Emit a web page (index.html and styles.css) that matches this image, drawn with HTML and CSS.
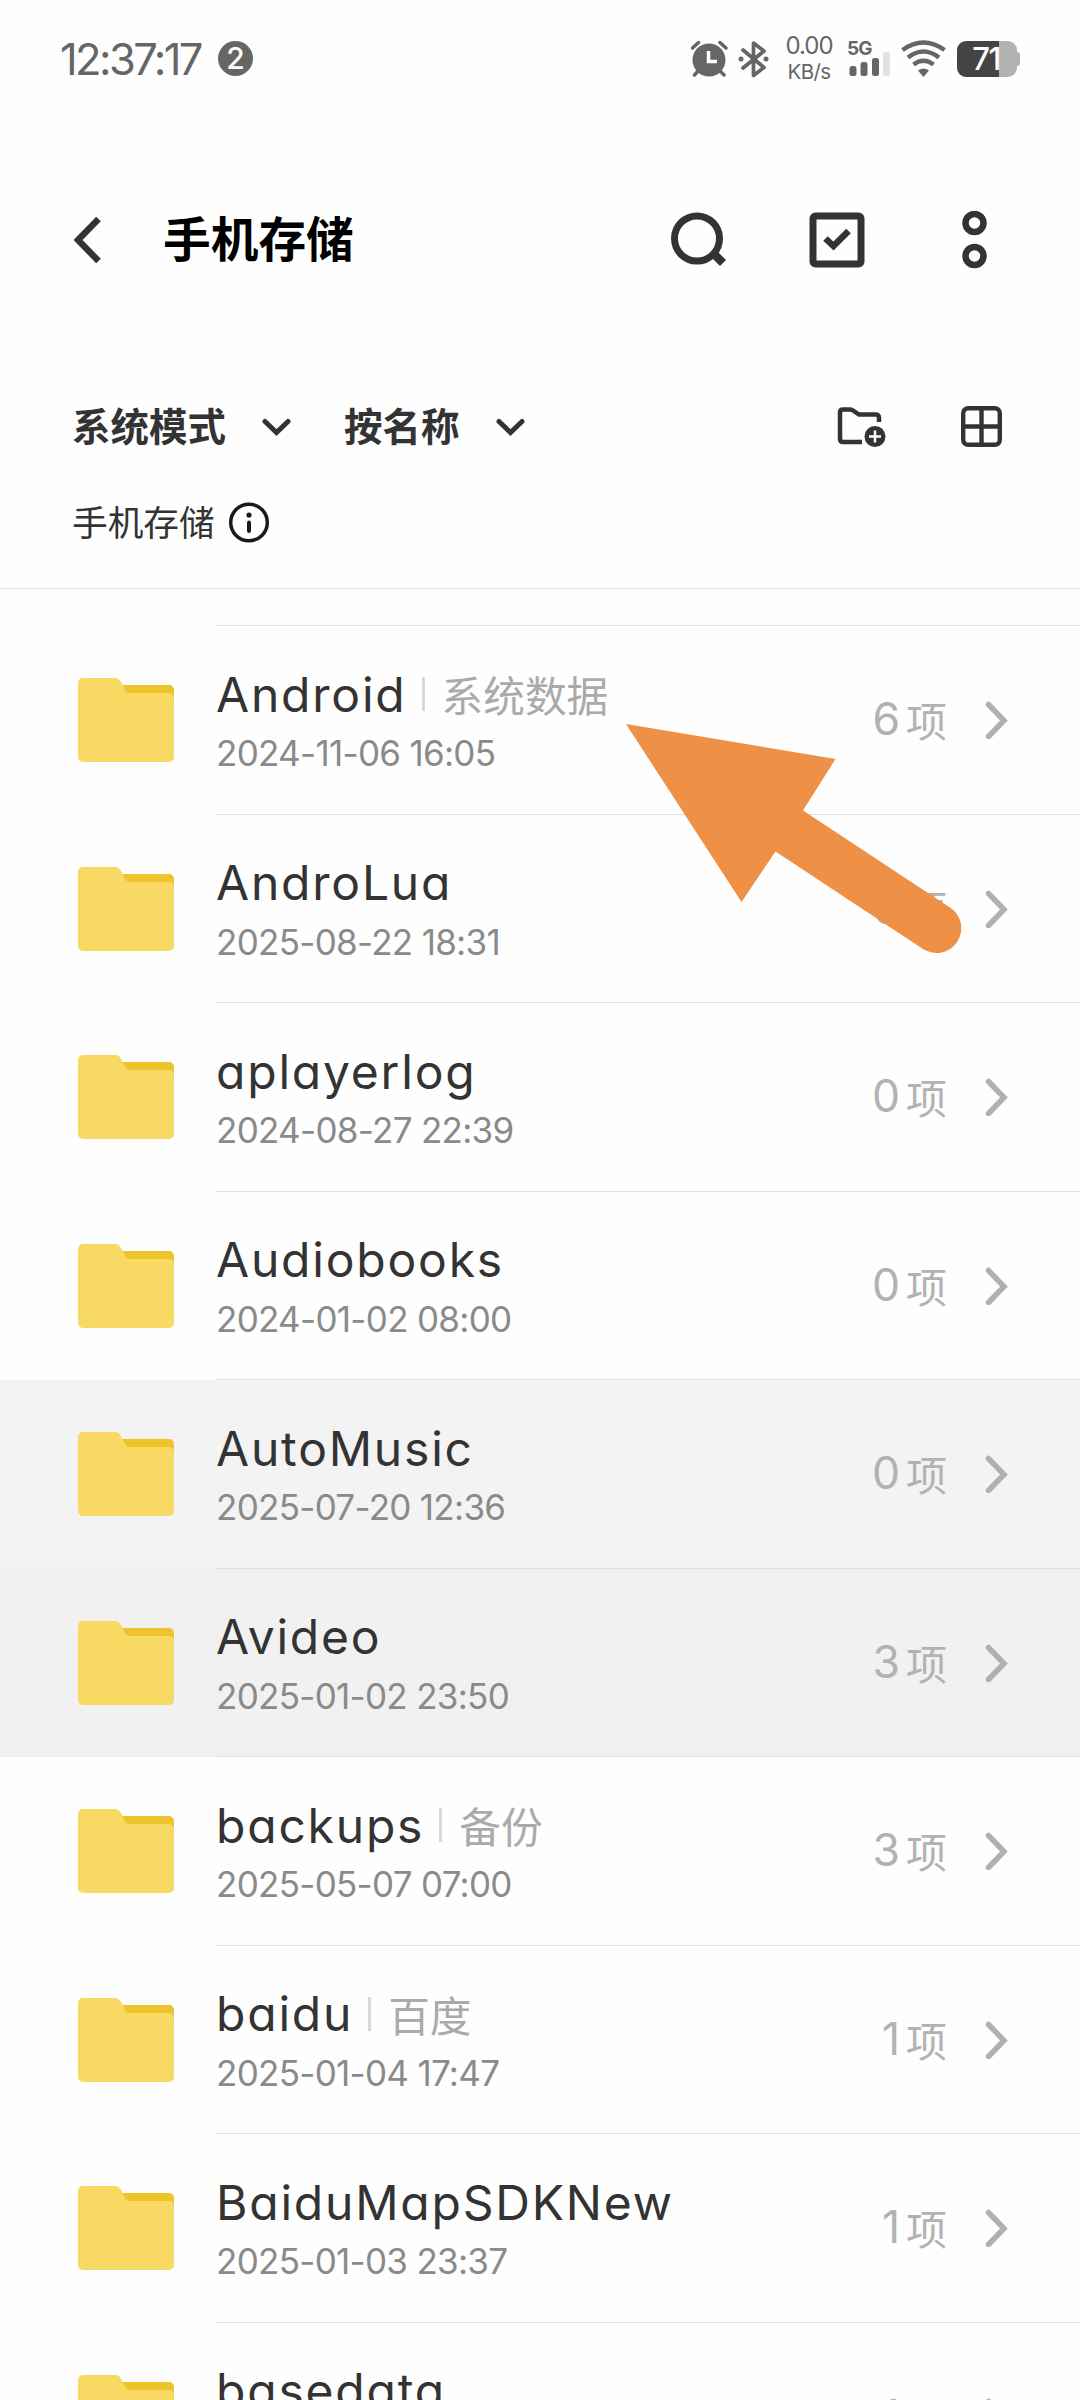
FILE: index.html
```html
<!DOCTYPE html>
<html lang="zh-CN">
<head>
    <meta charset="UTF-8">
    <meta name="viewport" content="width=device-width, initial-scale=1.0">
    <title>手机存储</title>
    <link rel="stylesheet" href="styles.css">
</head>
<body>
    <!-- iconos compartidos -->
    <svg class="sprite" width="0" height="0">
        <symbol id="folder" viewBox="0 0 96 84">
            <path d="M40 7H91a5 5 0 0 1 5 5V30H40Z" fill="#efc42b"/>
            <path d="M5 0H37Q41 0 43 4L47 12Q48.500 15 52 15H91Q95 15 96 19V79a5 5 0 0 1-5 5H5a5 5 0 0 1-5-5V5a5 5 0 0 1 5-5Z" fill="#f7d963"/>
        </symbol>
        <symbol id="next" viewBox="0 0 24 38">
            <path d="M3.500 3.500L19 19.500L3.500 35.500" fill="none" stroke="#b0b0b0" stroke-width="5.500" stroke-linecap="round"/>
        </symbol>
        <symbol id="down" viewBox="0 0 30 18">
            <path d="M3 3.500L14.500 14.500L26 3.500" fill="none" stroke="#333" stroke-width="5" stroke-linecap="round"/>
        </symbol>
    </svg>

    <div class="phone">
        <div class="status">
            <span class="clock">12:37:17</span>
            <span class="badge">2</span>
            <div class="status-icons">
                <svg class="alarm" width="38" height="38" viewBox="0 0 38 38">
                    <circle cx="18" cy="20" r="16.500" fill="#666"/>
                    <path d="M1.500 8L7.500 2.500M35 8L29 2.500M3.500 35L7 31M33 35L29 31" stroke="#666" stroke-width="3.500" stroke-linecap="round"/>
                    <path d="M17.500 11V21.500H26" fill="none" stroke="#fefefe" stroke-width="3.500"/>
                </svg>
                <svg class="bluetooth" width="32" height="38" viewBox="0 0 32 38">
                    <path d="M5 10L26 27.500L15.500 35.500V3L26 11L5 28" fill="none" stroke="#666" stroke-width="3.700" stroke-linejoin="round" stroke-linecap="round"/>
                    <circle cx="3" cy="19" r="2.500" fill="#666"/>
                    <circle cx="28" cy="19" r="2.500" fill="#666"/>
                </svg>
                <div class="speed">
                    <span class="speed-num">0.00</span>
                    <span class="speed-unit">KB/s</span>
                </div>
                <div class="signal">
                    <span class="net">5G</span>
                    <svg width="42" height="25" viewBox="0 0 42 25">
                        <rect x="1.500" y="14" width="7" height="10" rx="2.500" fill="#666"/>
                        <rect x="12.500" y="10" width="7" height="14" rx="2.500" fill="#666"/>
                        <rect x="24" y="6" width="7" height="18" rx="2.500" fill="#666"/>
                        <rect x="35" y="0" width="7" height="24" rx="2.500" fill="#e2e2e2"/>
                    </svg>
                </div>
                <svg class="wifi" width="45" height="37" viewBox="0 0 45 37">
                    <g fill="none" stroke="#666" stroke-width="4.500">
                        <path d="M1.500 10Q22.500-5 43.500 10"/>
                        <path d="M7 17.500Q22.500 5.500 38 17.500"/>
                        <path d="M12.500 24.500Q22.500 17 32.500 24.500"/>
                    </g>
                    <path d="M17 30.500Q22.500 26.500 28 30.500L22.500 37Z" fill="#666"/>
                </svg>
                <div class="battery"><span>71</span></div>
            </div>
        </div>

        <div class="toolbar">
            <svg class="back" width="28" height="48" viewBox="0 0 28 48">
                <path d="M24.500 3L4 24L24.500 45" fill="none" stroke="#333" stroke-width="6.500"/>
            </svg>
            <h1 class="title">手机存储</h1>
            <div class="actions">
                <svg width="56" height="56" viewBox="0 0 56 56">
                    <circle cx="26" cy="26.500" r="22.500" fill="none" stroke="#333" stroke-width="7"/>
                    <path d="M41 40L52 51" stroke="#333" stroke-width="8.500"/>
                </svg>
                <svg width="56" height="56" viewBox="0 0 56 56">
                    <rect x="4" y="4" width="48" height="48" rx="2.500" fill="none" stroke="#333" stroke-width="7"/>
                    <path d="M16.500 26.500L24.500 34L39.500 19" fill="none" stroke="#333" stroke-width="6.500"/>
                </svg>
                <svg width="26" height="58" viewBox="0 0 26 58">
                    <circle cx="12.500" cy="12" r="9" fill="none" stroke="#333" stroke-width="6.500"/>
                    <circle cx="12.500" cy="45" r="9" fill="none" stroke="#333" stroke-width="6.500"/>
                </svg>
            </div>
        </div>

        <div class="filters">
            <span class="filter">系统模式</span>
            <svg class="down" width="30" height="18"><use href="#down"/></svg>
            <span class="filter second">按名称</span>
            <svg class="down" width="30" height="18"><use href="#down"/></svg>
            <div class="view-icons">
                <svg width="50" height="42" viewBox="0 0 50 42">
                    <path d="M42 16V12Q42 8.500 38.500 8.500H22L16 4.500Q14.500 3.500 12.500 3.500H6Q3 3.500 3 6.500V33Q3 36 6 36H25" fill="none" stroke="#333" stroke-width="4.500"/>
                    <circle cx="38" cy="30.500" r="10.500" fill="#333"/>
                    <path d="M38 24.500V36.500M32 30.500H44" stroke="#fefefe" stroke-width="2.500"/>
                </svg>
                <svg width="41" height="41" viewBox="0 0 41 41">
                    <rect x="2.200" y="2.200" width="36.600" height="36.600" rx="5" fill="none" stroke="#333" stroke-width="4.400"/>
                    <path d="M20.500 2V39M2 20.500H39" stroke="#333" stroke-width="4.400"/>
                </svg>
            </div>
        </div>

        <div class="path">
            <span>手机存储</span>
            <svg width="42" height="42" viewBox="0 0 42 42">
                <circle cx="21" cy="20.500" r="18.300" fill="none" stroke="#1a1a1a" stroke-width="3.500"/>
                <circle cx="21" cy="13" r="2.600" fill="#1a1a1a"/>
                <path d="M21 20.500V29" stroke="#1a1a1a" stroke-width="4" stroke-linecap="round"/>
            </svg>
        </div>

        <div class="list">
            <div class="first-line"></div>
            <div class="row">
                <svg class="folder"><use href="#folder"/></svg>
                <div class="info">
                    <div class="name">Android<span class="tag">系统数据</span></div>
                    <div class="date">2024-11-06 16:05</div>
                </div>
                <div class="count"><b>6</b>项</div>
                <svg class="next"><use href="#next"/></svg>
            </div>
            <div class="row">
                <svg class="folder"><use href="#folder"/></svg>
                <div class="info">
                    <div class="name">AndroLua</div>
                    <div class="date">2025-08-22 18:31</div>
                </div>
                <div class="count"><b>6</b>项</div>
                <svg class="next"><use href="#next"/></svg>
            </div>
            <div class="row">
                <svg class="folder"><use href="#folder"/></svg>
                <div class="info">
                    <div class="name">aplayerlog</div>
                    <div class="date">2024-08-27 22:39</div>
                </div>
                <div class="count"><b>0</b>项</div>
                <svg class="next"><use href="#next"/></svg>
            </div>
            <div class="row">
                <svg class="folder"><use href="#folder"/></svg>
                <div class="info">
                    <div class="name">Audiobooks</div>
                    <div class="date">2024-01-02 08:00</div>
                </div>
                <div class="count"><b>0</b>项</div>
                <svg class="next"><use href="#next"/></svg>
            </div>
            <div class="row active">
                <svg class="folder"><use href="#folder"/></svg>
                <div class="info">
                    <div class="name">AutoMusic</div>
                    <div class="date">2025-07-20 12:36</div>
                </div>
                <div class="count"><b>0</b>项</div>
                <svg class="next"><use href="#next"/></svg>
            </div>
            <div class="row active dark">
                <svg class="folder"><use href="#folder"/></svg>
                <div class="info">
                    <div class="name">Avideo</div>
                    <div class="date">2025-01-02 23:50</div>
                </div>
                <div class="count"><b>3</b>项</div>
                <svg class="next"><use href="#next"/></svg>
            </div>
            <div class="row">
                <svg class="folder"><use href="#folder"/></svg>
                <div class="info">
                    <div class="name">backups<span class="tag">备份</span></div>
                    <div class="date">2025-05-07 07:00</div>
                </div>
                <div class="count"><b>3</b>项</div>
                <svg class="next"><use href="#next"/></svg>
            </div>
            <div class="row">
                <svg class="folder"><use href="#folder"/></svg>
                <div class="info">
                    <div class="name">baidu<span class="tag">百度</span></div>
                    <div class="date">2025-01-04 17:47</div>
                </div>
                <div class="count"><b>1</b>项</div>
                <svg class="next"><use href="#next"/></svg>
            </div>
            <div class="row">
                <svg class="folder"><use href="#folder"/></svg>
                <div class="info">
                    <div class="name">BaiduMapSDKNew</div>
                    <div class="date">2025-01-03 23:37</div>
                </div>
                <div class="count"><b>1</b>项</div>
                <svg class="next"><use href="#next"/></svg>
            </div>
            <div class="row">
                <svg class="folder"><use href="#folder"/></svg>
                <div class="info">
                    <div class="name">basedata</div>
                </div>
                <div class="count"><b>1</b>项</div>
                <svg class="next"><use href="#next"/></svg>
            </div>

            <!-- flecha encima de la lista -->
            <svg class="arrow" width="336" height="230" viewBox="0 0 336 230">
                <path d="M0 0L209.500 35L177 86.500L324 183.500A24.500 24.500 0 0 1 297 225L149.500 127.500L115.500 178Z" fill="#ee9147"/>
            </svg>
        </div>
    </div>
</body>
</html>
```
FILE: styles.css
```css
* {
    box-sizing: border-box;
}
body {
    margin: 0;
    background-color: #fefefe;
    font-family: Inter, "Noto Sans CJK SC", sans-serif;
    color: #333;
}
svg {
    display: block;
    flex-shrink: 0;
}
.sprite {
    position: absolute;
}
.phone {
    width: 1080px;
    height: 2400px;
    overflow: hidden;
}

/* barra de estado */
.status {
    display: flex;
    align-items: center;
    height: 117px;
    padding: 0 60px;
    color: #666;
}
.clock {
    width: 158px;
    font-size: 43.5px;
    letter-spacing: -2.6px;
    white-space: nowrap;
}
.badge {
    width: 35px;
    height: 35px;
    border-radius: 50%;
    background-color: #666;
    color: #fefefe;
    font-size: 30px;
    font-weight: 500;
    line-height: 35px;
    text-align: center;
}
.status-icons {
    display: flex;
    align-items: center;
    margin-left: auto;
}
.bluetooth {
    margin-left: 9px;
}
.speed {
    display: flex;
    flex-direction: column;
    width: 50px;
    margin-left: 14px;
    text-align: center;
    white-space: nowrap;
}
.speed-num {
    font-size: 24px;
    line-height: 26px;
    letter-spacing: -1px;
}
.speed-unit {
    font-size: 20.5px;
    line-height: 26px;
    letter-spacing: -0.6px;
}
.signal {
    width: 42px;
    margin-left: 14px;
}
.net {
    display: block;
    height: 12px;
    margin-left: -1px;
    font-size: 19px;
    font-weight: 700;
    line-height: 17px;
    letter-spacing: -1px;
}
.wifi {
    margin-left: 11px;
}
.battery {
    position: relative;
    width: 60px;
    height: 36px;
    margin-left: 11px;
    margin-right: 3px;
    padding-right: 2px;
    border-radius: 9px;
    background: linear-gradient(90deg, #444 42px, #b2b2b2 42px);
    color: #fefefe;
    font-size: 31px;
    font-weight: 500;
    line-height: 36px;
    letter-spacing: -1.5px;
    text-align: center;
}
.battery::after {
    content: "";
    position: absolute;
    top: 11px;
    right: -3px;
    width: 3px;
    height: 14px;
    border-radius: 0 3px 3px 0;
    background-color: #b2b2b2;
}

/* cabecera */
.toolbar {
    display: flex;
    align-items: center;
    height: 245px;
    padding: 0 92px 0 74px;
}
.title {
    margin: 0 0 0 61px;
    color: #000;
    font-size: 47.7px;
    font-weight: 700;
    line-height: 60px;
}
.actions {
    display: flex;
    align-items: center;
    gap: 82px;
    margin-left: auto;
}
.actions svg:last-child {
    margin-left: 15px;
}
.filters {
    display: flex;
    align-items: center;
    height: 129px;
    padding: 0 78px 0 72px;
}
.filter {
    font-size: 38.5px;
    font-weight: 700;
    line-height: 50px;
}
.down {
    margin-left: 36px;
}
.second {
    margin-left: 52px;
}
.view-icons {
    display: flex;
    align-items: center;
    gap: 74px;
    margin-left: auto;
}
.path {
    display: flex;
    align-items: center;
    height: 98px;
    padding: 0 0 34px 72px;
    border-bottom: 1px solid #dfdfdf;
    font-size: 35.7px;
    line-height: 50px;
}
.path svg {
    margin-left: 13px;
}

/* lista de carpetas */
.list {
    position: relative;
    padding-top: 36px;
}
.first-line {
    height: 1px;
    margin-left: 216px;
    background-color: #dfdfdf;
}
.row {
    display: flex;
    align-items: center;
    height: 188.5px;
    padding: 0 71px 0 78px;
    background: linear-gradient(#dfdfdf, #dfdfdf) 216px 100% / 864px 1px no-repeat;
}
.active {
    background-color: #f3f3f3;
}
.dark {
    background-color: #f1f1f1;
}
.folder {
    width: 96px;
    height: 84px;
}
.info {
    flex: 1;
    height: 188px;
    padding-top: 38px;
    margin-left: 42px;
    white-space: nowrap;
}
.name {
    display: flex;
    align-items: center;
    height: 60px;
    font-size: 48px;
    font-weight: 400;
    letter-spacing: 1.8px;
    font-feature-settings: "cv11";
}
.tag {
    display: flex;
    align-items: center;
    margin-left: 15px;
    color: #aaa;
    font-size: 41.7px;
    letter-spacing: 0;
}
.tag::before {
    content: "";
    width: 3px;
    height: 34px;
    margin-right: 17px;
    background-color: #d8d8d8;
}
.date {
    height: 60px;
    color: #8a8a8a;
    font-size: 35px;
    line-height: 59px;
    letter-spacing: -0.7px;
}
.count {
    display: flex;
    align-items: center;
    margin-top: -2px;
    color: #b2b2b2;
    font-size: 41px;
}
.count b {
    margin-right: 6px;
    font-size: 44.5px;
    font-weight: 400;
}
.next {
    width: 24px;
    height: 38px;
    margin-left: 38px;
}
.arrow {
    position: absolute;
    top: 135px;
    left: 626px;
}
```
